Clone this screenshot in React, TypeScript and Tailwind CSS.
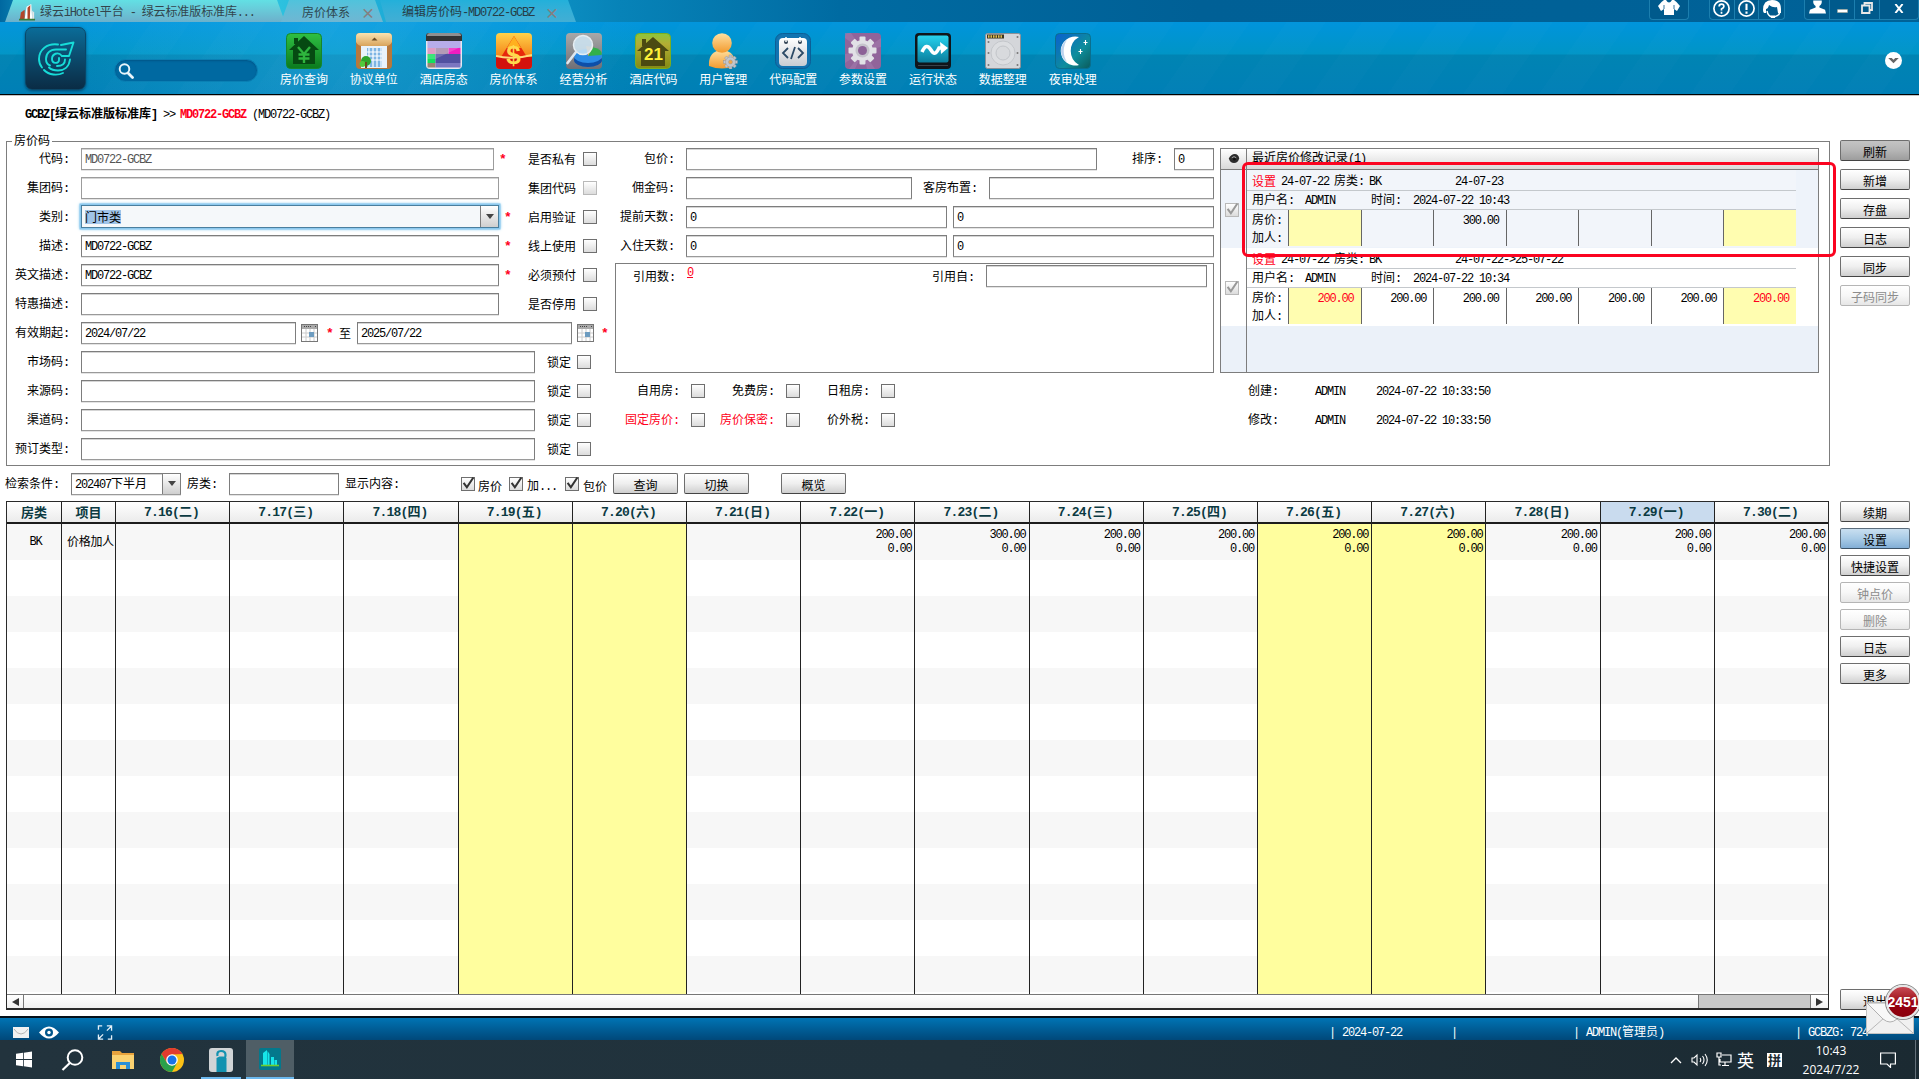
import React from "react";

/* Splits a string so Latin runs sit on a 6px pitch beside 12px Han characters. */
function T({ s, b = false, c = "" }: { s: string; b?: boolean; c?: string }) {
  const parts = s.match(/[\x20-\x7e]+|[^\x20-\x7e]+/g) || [];
  return (
    <span className={"whitespace-pre " + c}>
      {parts.map((p, i) =>
        /[\x20-\x7e]/.test(p[0]) ? (
          <span
            key={i}
            className={
              b
                ? "font-['Liberation_Mono','Noto_Sans_CJK_SC',monospace] tracking-[-0.8px]"
                : "font-['Liberation_Mono','Noto_Sans_CJK_SC',monospace] tracking-[-1.2px]"
            }
          >
            {p}
          </span>
        ) : (
          <span key={i}>{p}</span>
        )
      )}
    </span>
  );
}

function Box({ c = "", children }: { c?: string; children?: React.ReactNode }) {
  return (
    <div
      className={
        "flex h-[22px] shrink-0 items-center border border-[#7d7d7d] border-b-[#9a9a9a] bg-white pl-[3px] shadow-[inset_0_1px_0_#d5d5d5,0_1px_0_#e4e4e4] " + c
      }
    >
      {children}
    </div>
  );
}

function Check({ on = false, dim = false, c = "" }: { on?: boolean; dim?: boolean; c?: string }) {
  return (
    <div
      className={
        "flex h-[14px] w-[14px] shrink-0 items-center justify-center border bg-gradient-to-b from-white to-[#dcdcdc] " +
        (dim ? "border-[#b9b9b9] " : "border-[#6f6f6f] ") +
        c
      }
    >
      {on && (
        <svg viewBox="0 0 12 12" className="h-[13px] w-[13px] overflow-visible">
          <path d="M1.5 5.5 L4.5 9.5 L10.5 0.5" fill="none" stroke={dim ? "#999" : "#333"} strokeWidth="1.9" />
        </svg>
      )}
    </div>
  );
}

function Btn({ s, kind = "normal", c = "" }: { s: string; kind?: string; c?: string }) {
  const look: Record<string, string> = {
    normal: "border-[#6e6e6e] border-b-[#444] from-white via-[#efefef] to-[#cfcfcf] text-black",
    dark: "border-[#6e6e6e] border-b-[#444] from-[#c4c4c4] via-[#b5b5b5] to-[#9d9d9d] text-black",
    blue: "border-[#5b6c7c] border-b-[#3c5266] from-[#c9dff0] via-[#a9cbe6] to-[#82aed6] text-black",
    off: "border-[#b5b5b5] from-white via-[#f7f7f7] to-[#e6e6e6] text-[#8c8c8c]",
  };
  return (
    <div
      className={
        "flex h-[21px] shrink-0 items-center justify-center rounded-[2px] border bg-gradient-to-b pt-[3px] " + look[kind] + " " + c
      }
    >
      {s}
    </div>
  );
}

const Star = ({ c = "" }: { c?: string }) => (
  <span className={"w-[8px] shrink-0 pt-[3px] font-['Liberation_Mono',monospace] text-[13px] font-bold text-[#ff0020] " + c}>*</span>
);

function Label({ s, c = "" }: { s: string; c?: string }) {
  return (
    <div className={"shrink-0 text-right " + c}>
      <T s={s} />
    </div>
  );
}

const Calendar = ({ c = "" }: { c?: string }) => (
  <svg viewBox="0 0 17 18" className={"h-[18px] w-[17px] shrink-0 " + c}>
    <rect x="0.5" y="0.5" width="16" height="17" fill="#fff" stroke="#777" />
    <rect x="1" y="1" width="15" height="4" fill="#aaa" />
    <path d="M3 2.5h8M14 2.5h1" stroke="#444" strokeDasharray="1 1" />
    <path d="M1 9h15M1 13h15M5 5v12M9 5v12M13 5v12" stroke="#ccc" />
    <rect x="8" y="8" width="5" height="5" fill="#6d9cc0" />
  </svg>
);

/* ---------- toolbar icons, all 36 x 36 ---------- */
const defs = (
  <svg className="absolute h-0 w-0">
    <defs>
      <linearGradient id="gGreen" x2="0" y2="1"><stop stopColor="#2fc043" /><stop offset="1" stopColor="#0b7a1e" /></linearGradient>
      <linearGradient id="gTan" x2="0" y2="1"><stop stopColor="#fbe3b0" /><stop offset="1" stopColor="#d9a45c" /></linearGradient>
      <linearGradient id="gOrange" x2="0" y2="1"><stop stopColor="#ffd24a" /><stop offset="0.6" stopColor="#f58a1c" /></linearGradient>
      <linearGradient id="gGrey" x2="0" y2="1"><stop stopColor="#a8a8a8" /><stop offset="1" stopColor="#6f6f76" /></linearGradient>
      <linearGradient id="gOlive" x2="0" y2="1"><stop stopColor="#8cc63c" /><stop offset="0.3" stopColor="#b3ad34" /><stop offset="1" stopColor="#858a14" /></linearGradient>
      <linearGradient id="gMan" x2="0" y2="1"><stop stopColor="#ffe0a0" /><stop offset="1" stopColor="#f29a2e" /></linearGradient>
      <linearGradient id="gWhite" x2="0" y2="1"><stop stopColor="#fff" /><stop offset="1" stopColor="#c9ccd2" /></linearGradient>
      <linearGradient id="gCyan" x2="0" y2="1"><stop stopColor="#27d2ee" /><stop offset="1" stopColor="#0a7d9c" /></linearGradient>
      <linearGradient id="gNight" x2="1" y2="1"><stop stopColor="#0b5fd0" /><stop offset="0.6" stopColor="#0d8e9c" /><stop offset="1" stopColor="#0b5a5a" /></linearGradient>
    </defs>
  </svg>
);

const gearTeeth = [0, 45, 90, 135, 180, 225, 270, 315];

const icons: Record<string, React.ReactNode> = {
  房价查询: (
    <>
      <rect x=".5" y=".5" width="35" height="35" rx="4" fill="url(#gGreen)" stroke="#17862a" />
      <path d="M18 3 L33 17 H29 V31 H7 V17 H3 Z M8 5h4v6h-4z" fill="#064a12" />
      <path d="M12 14 L18 21 L24 14 M18 21 V30 M12.5 21.5 H23.5 M12.5 25.5 H23.5" stroke="#2fb53e" strokeWidth="2.4" fill="none" />
    </>
  ),
  协议单位: (
    <>
      <rect width="36" height="36" rx="4" fill="#b7783c" />
      <path d="M0 4a4 4 0 0 1 4-4h28a4 4 0 0 1 4 4v5q-2 4-6 4H6Q2 13 0 9z" fill="url(#gTan)" />
      <rect x="5" y="13" width="26" height="22" fill="#e9f3fb" />
      <rect x="11" y="15" width="15" height="19" fill="#7db5e4" />
      <path d="M13 15v19M17 15v19M21 15v19M25 15v19M11 19h15M11 23h15M11 27h15" stroke="#fff" strokeWidth="1.2" />
      <path d="M15.5 7.5h6l-3-3z" fill="#6b4a20" />
      <circle cx="10" cy="28" r="5" fill="#2fa52d" /><circle cx="6.5" cy="31" r="3" fill="#53c93c" /><path d="M10 29v6" stroke="#6b4a20" strokeWidth="2" />
    </>
  ),
  酒店房态: (
    <>
      <rect width="36" height="36" rx="4" fill="#e8e8f0" />
      <path d="M0 3a3 3 0 0 1 3-3h30a3 3 0 0 1 3 3v5H0z" fill="#333" /><path d="M1 3a3 3 0 0 1 3-3h28a3 3 0 0 1 3 3z" fill="#909090" />
      <rect x="1.5" y="8" width="33" height="7" fill="#a89be6" />
      <rect x="1.5" y="15" width="8" height="6" fill="#d985b6" /><rect x="9.5" y="15" width="13" height="6" fill="#a486a8" /><rect x="22.5" y="15" width="12" height="6" fill="#f01cc0" />
      <rect x="1.5" y="21" width="8" height="9" fill="#12e05c" /><rect x="9.5" y="21" width="25" height="9" fill="#5150a0" />
      <rect x="1.5" y="30" width="8" height="4.5" fill="#9a8470" /><rect x="9.5" y="30" width="25" height="4.5" fill="#7b76c0" />
      <path d="M1.5 8h33v6L9.5 26H1.5z" fill="#fff" opacity=".18" />
    </>
  ),
  房价体系: (
    <>
      <rect width="36" height="36" rx="4" fill="url(#gOrange)" />
      <path d="M18 3 L34 29 H2 Z" fill="#e8280c" /><path d="M18 3L25 15H11z" fill="#ffb01e" />
      <path d="M0 24h36v8a4 4 0 0 1-4 4H4a4 4 0 0 1-4-4z" fill="#d3120c" />
      <path d="M0 23 Q18 27 36 22" stroke="#ffd97a" strokeWidth="2" fill="none" />
      <text x="17.5" y="30.5" textAnchor="middle" fontFamily="Liberation Sans, sans-serif" fontWeight="bold" fontSize="26" fill="#ffd84d">$</text>
    </>
  ),
  经营分析: (
    <>
      <rect width="36" height="36" rx="4" fill="url(#gGrey)" />
      <ellipse cx="22" cy="27" rx="14" ry="7" fill="#0d4fa8" /><ellipse cx="22" cy="23" rx="14" ry="7" fill="#2b8ce6" />
      <path d="M22 23 L26 14 A14 7 0 0 1 35.5 22z" fill="#32b04a" /><path d="M22 23 L20 13 l7 1z" fill="#f3a058" />
      <circle cx="17" cy="12" r="9.5" fill="#cfe6f5" fillOpacity=".85" stroke="#e6eef3" strokeWidth="1.5" />
      <path d="M10 19 L1.5 30" stroke="#dfe7ee" strokeWidth="2.6" strokeLinecap="round" />
    </>
  ),
  酒店代码: (
    <>
      <rect x=".5" y=".5" width="35" height="35" rx="4" fill="url(#gOlive)" stroke="#7cae1d" />
      <path d="M18 4 L34 18 H30 V33 H6 V18 H2 Z M7 6h4v7h-4z" fill="#4b4a12" />
      <text x="18.5" y="27" textAnchor="middle" fontFamily="Liberation Sans, sans-serif" fontWeight="bold" fontSize="17" fill="#fff13a">21</text>
    </>
  ),
  用户管理: (
    <>
      <path d="M4 33 Q3 18 17 17 Q31 18 30 33 Q17 38 4 33z" fill="url(#gMan)" />
      <circle cx="17" cy="10" r="9.8" fill="url(#gMan)" />
      <g transform="translate(25.5 29)" fill="#c3c6cc" stroke="#8c8f96" strokeWidth=".4">
        {gearTeeth.map((a) => <rect key={a} x="-1.5" y="-7" width="3" height="4" transform={`rotate(${a})`} />)}
        <circle r="5" /><circle r="2" fill="#f0a84a" />
      </g>
    </>
  ),
  代码配置: (
    <>
      <rect x=".5" y=".5" width="35" height="35" rx="7" fill="#1173b0" stroke="#0c5f96" />
      <rect x="4" y="5" width="28" height="28" rx="4" fill="url(#gWhite)" />
      <circle cx="11" cy="9" r="2" fill="#345" /><circle cx="25" cy="9" r="2" fill="#345" />
      <path d="M11 4v5M25 4v5" stroke="#fff" strokeWidth="1.5" />
      <path d="M13 15l-5 5 5 5M23 15l5 5-5 5M20 14l-4 12" stroke="#2c4a66" strokeWidth="1.8" fill="none" />
    </>
  ),
  参数设置: (
    <>
      <rect width="36" height="36" rx="4" fill="#91649a" />
      <path d="M18 18L0 5V0h6zM18 18L36 5V14zM18 18L0 30v-9zM18 18L30 36h-8zM18 18L10 36H4z" fill="#a47cae" opacity=".6" />
      <g transform="translate(17.5 17.5)" fill="#e1e1e6">
        {gearTeeth.map((a) => <rect key={a} x="-3" y="-14" width="6" height="8" rx="1" transform={`rotate(${a})`} />)}
        <circle r="10.5" /><circle r="7" fill="#c5c3cc" /><circle r="4.5" fill="#8c6197" />
      </g>
    </>
  ),
  运行状态: (
    <>
      <rect width="36" height="36" rx="4" fill="#10151a" />
      <rect x="2.5" y="2.5" width="31" height="27" rx="2" fill="url(#gCyan)" />
      <path d="M7 19 C10 12 13 12 16 17 S21 21 24 15 H27" stroke="#fff" strokeWidth="3.6" fill="none" />
      <path d="M25 9l8 6-7 6z" fill="#fff" /><path d="M3 32.5h30" stroke="#3a4148" />
    </>
  ),
  数据整理: (
    <>
      <rect x=".5" y=".5" width="35" height="35" rx="2" fill="#d4d6da" stroke="#8c9198" />
      <rect x="2" y="1.5" width="17" height="4" fill="#3a3420" /><path d="M3 3.5h15" stroke="#e0bf50" strokeWidth="2.4" strokeDasharray="1.5 1" />
      <circle cx="18" cy="20" r="12" fill="#dcdee1" stroke="#c4c7cb" /><circle cx="18" cy="20" r="7" fill="#d8dadd" stroke="#c2c5c9" />
      <g fill="#777"><circle cx="3.5" cy="9" r="1" /><circle cx="32.5" cy="4" r="1" /><circle cx="3.5" cy="32" r="1" /><circle cx="32.5" cy="32" r="1" /><circle cx="3.5" cy="20" r="1" /><circle cx="32.5" cy="20" r="1" /></g>
    </>
  ),
  夜审处理: (
    <>
      <rect x=".5" y=".5" width="35" height="35" rx="4" fill="url(#gNight)" stroke="#0a6f8e" />
      <path d="M24 4 A14.5 14.5 0 1 0 24 32 A16 16 0 0 1 24 4z" fill="#fff" /><path d="M12 7A13 13 0 0 0 12 29A20 20 0 0 1 12 7z" fill="#bcd3ee" />
      <path d="M30.5 7v5M28.5 9.5h4M25.5 16v5M23.5 18.5h4" stroke="#fff" strokeWidth="1.1" />
    </>
  ),
};

function Header() {
  return (
    <header className="relative h-[96px] shrink-0 border-b border-[#c4c4c4] bg-black pb-px">
      <div className="flex h-[22px] items-start bg-[linear-gradient(90deg,#0068a0_0,#1fb4d8_60px,#38cfe3_210px,#25b7dc_330px,#149fd0_460px,#0783b8_620px,#006ba2_840px,#006096_1200px,#006298_100%)] pl-[5px]">
        <div className="flex h-[22px] w-[280px] items-center bg-gradient-to-b from-[#62e0e4] to-[#6cb0cb] pl-[14px] pt-[2px] text-[#33454d] [clip-path:polygon(8px_0,272px_0,280px_100%,0_100%)]">
          <svg viewBox="0 0 18 18" className="mr-[4px] h-[17px] w-[17px]">
            <path d="M1 16L2 9l4-3v10z" fill="#b3452a" /><path d="M6 16L8 3l5-3 1 16z" fill="#fff" /><path d="M9 4v12h2.500L12 1z" fill="#b3452a" /><path d="M14 7l2 2v7h-2z" fill="#e7e7e7" /><path d="M0 16.500h17" stroke="#3c7c3a" strokeWidth="2" />
          </svg>
          <T s="绿云iHotel平台 - 绿云标准版标准库..." c="tracking-[-0.1px]" />
        </div>
        <div className="-ml-[4px] flex h-[22px] w-[102px] items-center bg-gradient-to-b from-[#4fc3dc] to-[#6fb6d2] pl-[21px] pt-[2px] text-[#2f474f] [clip-path:polygon(8px_0,94px_0,102px_100%,95px_100%,0_100%)]">
          <T s="房价体系" />
          <span className="ml-[11px] text-[14px] leading-none font-bold text-[#857f80]">×</span>
        </div>
        <div className="-ml-[3px] flex h-[22px] w-[196px] items-center bg-gradient-to-b from-[#22b0da] to-[#42aed4] pl-[22px] pt-[2px] text-[#263d47] [clip-path:polygon(0_0,188px_0,196px_100%,6px_100%)]">
          <T s="编辑房价码-MD0722-GCBZ" />
          <span className="ml-[11px] text-[14px] leading-none font-bold text-[#857f80]">×</span>
        </div>
        <div className="ml-auto flex h-[20px]">
          <div className="flex w-[40px] items-center justify-center rounded-b-[4px] border border-t-0 border-[#1c7faf] bg-[#005a8c]">
            <svg viewBox="0 0 22 15" className="mb-[5px] h-[15px] w-[22px]"><path d="M6 0L3.500 2 0 6l3 5 3-2v6h10V9l3 2 3-5-3.500-4L16 0l-2 0q-3 5-6 0z" fill="#fff" /><path d="M6 5v4M16 5v4" stroke="#00568a" strokeWidth=".8" /></svg>
          </div>
          <div className="ml-[20px] flex w-[76px] rounded-b-[4px] border border-t-0 border-[#1c7faf] bg-[#005a8c]">
            <div className="flex w-[25px] items-center justify-center border-r border-[#1c7faf]">
              <svg viewBox="0 0 20 20" className="mb-[3px] h-[19px] w-[19px]"><circle cx="10" cy="10" r="8" fill="none" stroke="#fff" strokeWidth="1.8" /><path d="M7.5 8q0-2.500 2.500-2.500t2.500 2.300q0 1.400-2.500 2.700v1.500M10 13.500v2" fill="none" stroke="#fff" strokeWidth="1.8" /></svg>
            </div>
            <div className="flex w-[25px] items-center justify-center border-r border-[#1c7faf]">
              <svg viewBox="0 0 20 20" className="mb-[3px] h-[19px] w-[19px]"><circle cx="10" cy="10" r="8" fill="none" stroke="#fff" strokeWidth="1.8" /><path d="M10 5v6.500M10 13.200v2.200" stroke="#fff" strokeWidth="2.2" /></svg>
            </div>
            <div className="flex w-[25px] items-center justify-center">
              <svg viewBox="0 0 20 18" className="mb-[2px] h-[18px] w-[20px]"><path d="M1 10Q1 0 10 0t9 9v4h-3l-1-6Q11 8 7 5 6 9 4 9v4H2q-1-1-1-3z" fill="#fff" /><path d="M5 11q1 5 5 6M18 12q-1 4-6 5" stroke="#fff" strokeWidth="1.4" fill="none" /><path d="M9 15.500h4v2.500H9z" fill="#fff" /></svg>
            </div>
          </div>
          <div className="ml-[19px] flex w-[115px] rounded-b-[4px] border border-t-0 border-[#1c7faf] bg-[#005a8c]">
            <div className="flex w-[25px] justify-center border-r border-[#1c7faf]">
              <svg viewBox="0 0 18 14" className="ml-[1px] h-[14px] w-[17px]"><path d="M4.500 0h9q.5 4-2.500 6v1.500L17 10l1 4H0l1-4 6-2.500V6Q4 4 4.500 0z" fill="#fff" /></svg>
            </div>
            <div className="flex w-[25px] justify-center border-r border-[#1c7faf] pt-[9px]"><div className="h-[4px] w-[11px] rounded-[1px] border border-[#9aa] bg-white" /></div>
            <div className="flex w-[25px] justify-center border-r border-[#1c7faf] pt-[2px]">
              <svg viewBox="0 0 12 12" className="h-[12px] w-[12px]"><path d="M3.500 3V1h7.500v7H9M1 3.500h7.500V11H1z" fill="none" stroke="#e8e8e8" strokeWidth="1.8" /></svg>
            </div>
            <div className="flex flex-1 justify-center pt-[4px]"><svg viewBox="0 0 10 10" className="h-[9px] w-[10px]"><path d="M1 0l8 10M9 0L1 10" stroke="#fff" strokeWidth="2.2" /></svg></div>
          </div>
        </div>
      </div>
      <div className="flex h-[72px] bg-[repeating-linear-gradient(125deg,rgba(255,255,255,0.012)_0_32px,transparent_32px_62px),radial-gradient(circle_at_340px_20px,rgba(60,190,240,0.35),transparent_300px),linear-gradient(180deg,#0094dc_0,#0095c6_32px,#0084b3_33px,#007fb6_72px)]">
        <div className="ml-[25px] mt-[5px] flex h-[63px] w-[61px] items-center justify-center rounded-[7px] border border-[#0a4768] bg-gradient-to-b from-[#0a6c98] via-[#0b4a6c] to-[#0a2c45] shadow-[0_1px_3px_#00456d]">
          <svg viewBox="0 0 36 33" className="h-[33px] w-[36px] overflow-visible" fill="none" stroke="#17dcd8" strokeWidth="1.9" strokeLinecap="round" strokeLinejoin="round">
            <path d="M20 2.500C9 1 1 8 1 17c0 3 1 6 3 8.500" />
            <path d="M23 3 35.500.5 31 14h-7" />
            <path d="M28 7.500H18c-6 0-10 4-10 9.500 0 3 1.500 5.500 4 6.500" />
            <path d="M24 14c-4-5-10-2-10 3 0 5 7 5 7 1v-2" />
            <path d="M32 17.500c-1 8-6.500 11-12 11-4 0-7-1-9-3" />
            <path d="M27 17.500c0 4-3 6.500-8 6.500M6 28c5 5.500 14 5.500 19 3" />
          </svg>
        </div>
        <div className="ml-[28px] mt-[37px] flex h-[23px] w-[144px] items-center rounded-full border border-[#0a80b4] bg-[#0069a1] pl-[3px] shadow-[inset_0_1px_2px_#005688]">
          <svg viewBox="0 0 16 16" className="h-[16px] w-[16px]"><circle cx="6.5" cy="6" r="4.8" fill="none" stroke="#e9f5fb" strokeWidth="1.9" /><path d="M10 10l4.500 4.500" stroke="#e9f5fb" strokeWidth="2.8" strokeLinecap="round" /></svg>
        </div>
        <nav className="ml-[11px] mt-[11px] flex">
          {Object.keys(icons).map((k) => (
            <div key={k} className="flex w-[69.9px] flex-col items-center">
              <svg viewBox="0 0 36 36" className="h-[36px] w-[36px]">{icons[k]}</svg>
              <span className="mt-[3px] leading-[13px] whitespace-nowrap text-white">{k}</span>
            </div>
          ))}
        </nav>
        <div className="mt-[30px] mr-[17px] ml-auto flex h-[17px] w-[17px] items-center justify-center rounded-full bg-white">
          <svg viewBox="0 0 12 8" className="h-[7px] w-[11px]"><path d="M0 1h4l2 2 2-2h4L6 7z" fill="#666" /></svg>
        </div>
      </div>
    </header>
  );
}

/* ---------- left part of the form ---------- */
const leftRows = [
  { l: "代码:", v: "MD0722-GCBZ", w: "w-[413px] border-[#9c9c9c]", star: "ml-[5px]", c: "是否私有", cc: "ml-[21px]", grey: true },
  { l: "集团码:", v: "", w: "w-[418px] border-[#9c9c9c]", star: "", c: "集团代码", cc: "ml-[29px]" },
  { l: "类别:", v: "门市类", w: "", star: "ml-[5px]", c: "启用验证", cc: "ml-[16px]" },
  { l: "描述:", v: "MD0722-GCBZ", w: "w-[418px]", star: "ml-[5px]", c: "线上使用", cc: "ml-[16px]" },
  { l: "英文描述:", v: "MD0722-GCBZ", w: "w-[418px]", star: "ml-[5px]", c: "必须预付", cc: "ml-[16px]" },
  { l: "特惠描述:", v: "", w: "w-[418px]", star: "", c: "是否停用", cc: "ml-[29px]" },
];

function LeftForm() {
  return (
    <div className="-mt-[1px] w-[608px] shrink-0">
      {leftRows.map((r, i) => (
        <div key={r.l} className="flex h-[29px] items-center">
          <Label s={r.l} c="mr-[12px] w-[62px]" />
          {i === 2 ? (
            <div className="flex h-[23px] w-[418px] shrink-0 items-center border border-[#4a7f9e] bg-[#f5f8fa] pl-[3px] shadow-[0_0_0_1.5px_#8dc9ee,0_0_3px_1px_#4fb0e6]">
              <span className="bg-[#a0c4e8]">{r.v}</span>
              <Drop c="ml-auto h-full w-[18px]" />
            </div>
          ) : (
            <Box c={r.w}>
              <T s={r.v} c={r.grey ? "text-[#555]" : ""} />
            </Box>
          )}
          {r.star && <Star c={r.star} />}
          <span className={"mr-[7px] whitespace-nowrap " + r.cc}>{r.c}</span>
          <Check dim={i === 1} />
        </div>
      ))}
      <div className="flex h-[29px] items-center">
        <Label s="有效期起:" c="mr-[12px] w-[62px]" />
        <Box c="w-[215px]"><T s="2024/07/22" /></Box>
        <Calendar c="ml-[5px]" />
        <Star c="ml-[8px]" />
        <span className="mr-[6px] ml-[5px]">至</span>
        <Box c="w-[215px]"><T s="2025/07/22" /></Box>
        <Calendar c="ml-[5px]" />
        <Star c="ml-[7px]" />
      </div>
      {["市场码:", "来源码:", "渠道码:", "预订类型:"].map((l) => (
        <div key={l} className="flex h-[29px] items-center">
          <Label s={l} c="mr-[12px] w-[62px]" />
          <Box c="w-[454px]" />
          <span className="mr-[6px] ml-[12px]">锁定</span>
          <Check />
        </div>
      ))}
    </div>
  );
}

function Drop({ c = "" }: { c?: string }) {
  return (
    <div className={"flex items-center justify-center border-l border-[#7d7d7d] bg-gradient-to-b from-white to-[#cfcfcf] " + c}>
      <div className="h-0 w-0 border-x-4 border-t-[5px] border-x-transparent border-t-[#444]" />
    </div>
  );
}

function MiddleForm() {
  return (
    <div className="-mt-[1px] w-[605px] shrink-0">
      <div className="flex h-[29px] items-center">
        <Label s="包价:" c="mr-[12px] w-[59px]" />
        <Box c="w-[411px]" />
        <Label s="排序:" c="ml-[32px] mr-[12px] w-[33px]" />
        <Box c="w-[40px]"><T s="0" /></Box>
      </div>
      <div className="flex h-[29px] items-center">
        <Label s="佣金码:" c="mr-[12px] w-[59px]" />
        <Box c="w-[226px]" />
        <Label s="客房布置:" c="mr-[12px] w-[65px]" />
        <Box c="w-[225px]" />
      </div>
      {["提前天数:", "入住天数:"].map((l) => (
        <div key={l} className="flex h-[29px] items-center">
          <Label s={l} c="mr-[12px] w-[59px]" />
          <Box c="mr-[6px] w-[261px]"><T s="0" /></Box>
          <Box c="w-[261px]"><T s="0" /></Box>
        </div>
      ))}
      <div className="mt-[3px] flex h-[110px] w-[599px] items-start border border-[#7d7d7d] pt-[1px]">
        <Label s="引用数:" c="w-[59px] pt-[4px]" />
        <T s="0" c="ml-[12px] -mt-[1px] text-[#ff0020] underline" />
        <Label s="引用自:" c="ml-auto mr-[12px] pt-[4px]" />
        <Box c="mr-[6px] w-[221px]" />
      </div>
      <div className="mt-[3px] grid w-[300px] grid-cols-[90px_95px_95px]">
        {["自用房:", "免费房:", "日租房:", "固定房价:", "房价保密:", "价外税:"].map((l, i) => (
          <div key={l} className="flex h-[29px] items-center justify-end">
            <span className={i === 3 || i === 4 ? "text-[#ff0020]" : ""}><T s={l} /></span>
            <Check c="ml-[12px]" />
          </div>
        ))}
      </div>
    </div>
  );
}

const records = [
  { range: "24-07-23", time: "2024-07-22 10:43", vals: ["", "", "300.00", "", "", "", ""], bg: "bg-[#eef3fa]", inner: "bg-[#f2f5fa]" },
  { range: "24-07-22->25-07-22", time: "2024-07-22 10:34", vals: Array(7).fill("200.00"), bg: "bg-white", inner: "bg-white" },
];

function RecordPanel() {
  return (
    <div className="w-[608px] shrink-0 pt-[3px]">
      <div className="relative h-[225px] w-[599px] border border-[#7d7d7d] bg-[#ebf1f9]">
        <div className="flex h-[21px] items-center border-b border-[#7d7d7d] bg-gradient-to-b from-white to-[#d9d9d9]">
          <div className="flex h-full w-[26px] items-center justify-center border-r border-[#7d7d7d] pb-[2px]">
            <svg viewBox="0 0 14 12" className="h-[9px] w-[12px]"><path d="M0 6Q3 0 8 0t6 6q-2 6-7 6T0 6z" fill="#2c2c2c" /><path d="M4 5q3-3 6 0" stroke="#aaa" strokeWidth="1.3" fill="none" /><circle cx="7.5" cy="7" r="1.8" fill="#111" /></svg>
          </div>
          <T s="最近房价修改记录(1)" c="-mt-[2px] ml-[5px]" />
        </div>
        <div className="flex h-[202px]">
          <div className="w-[26px] shrink-0 border-r border-[#7d7d7d]">
            {records.map((r) => (
              <div key={r.time} className={"flex h-[78px] items-center justify-center " + r.bg}>
                <Check on dim c="mr-[3px] mt-[1px]" />
              </div>
            ))}
          </div>
          <div className="flex-1">
            {records.map((r, k) => (
              <div key={r.time} className={"h-[78px] " + r.bg}>
                <div className={"h-[77px] w-[549px] " + r.inner}>
                  <div className="flex h-[21px] items-center border-b border-[#c4c8cc] pt-[2px] pl-[5px]">
                    <span className="text-[#ff0020]">设置</span>
                    <T s=" 24-07-22 " c="-mx-[1px]" />
                    <T s="房类:" />
                    <T s="BK" c="ml-[5px] w-[86px]" />
                    <T s={r.range} />
                  </div>
                  <div className="flex h-[19px] items-center border-b border-[#c4c8cc] pl-[5px]">
                    <T s="用户名:" c="w-[53px]" />
                    <T s="ADMIN" c="w-[66px]" />
                    <T s="时间:" c="w-[42px]" />
                    <T s={r.time} />
                  </div>
                  <div className="flex h-[36px]">
                    <div className="flex w-[41px] flex-col pl-[5px] leading-[18px]"><T s="房价:" c="h-[18px]" /><T s="加人:" c="h-[18px]" /></div>
                    {r.vals.map((v, i) => (
                      <div
                        key={i}
                        className={
                          "flex-1 border-l border-[#666] pr-[7px] text-right leading-[18px] " +
                          (i === 0 || i === 6 ? "bg-[#fffdb0] " : "") +
                          (k === 1 && (i === 0 || i === 6) ? "text-[#ff0020]" : "")
                        }
                      >
                        <T s={v} />
                      </div>
                    ))}
                  </div>
                </div>
              </div>
            ))}
          </div>
        </div>
        <div className="absolute top-[13px] left-[21px] h-[95px] w-[594px] rounded-[6px] border-[3px] border-[#fb0420]" />
      </div>
      <div className="mt-[3px]">
        {["创建:", "修改:"].map((l) => (
          <div key={l} className="flex h-[29px] items-center pl-[28px]">
            <T s={l} c="w-[67px]" />
            <T s="ADMIN" c="w-[61px]" />
            <T s="2024-07-22 10:33:50" />
          </div>
        ))}
      </div>
    </div>
  );
}

/* ---------- price calendar ---------- */
const days = ["7.16(二)", "7.17(三)", "7.18(四)", "7.19(五)", "7.20(六)", "7.21(日)", "7.22(一)", "7.23(二)", "7.24(三)", "7.25(四)", "7.26(五)", "7.27(六)", "7.28(日)", "7.29(一)", "7.30(二)"];
const weekend = [3, 4, 10, 11];

function PriceTable() {
  const head = "flex h-[22px] shrink-0 items-center justify-center border-b-2 border-[#1c1c1c] text-[13px] font-bold text-[#0b3a42] ";
  const stripe = "h-[471px] bg-[repeating-linear-gradient(180deg,#f7f7f7_0_36px,#fff_36px_72px)]";
  return (
    <div className="h-[509px] w-[1823px] shrink-0 border border-b-2 border-[#2a2a2a]">
      <div className="flex h-[492px] overflow-hidden">
        <div className="w-[55px] shrink-0 border-r border-[#222]">
          <div className={head + "bg-gradient-to-b from-white to-[#ebebeb]"}>房类</div>
          <div className={stripe}><div className="flex h-[34px] items-center justify-center pl-[3px]"><T s="BK" /></div></div>
        </div>
        <div className="w-[54px] shrink-0 border-r border-[#222]">
          <div className={head + "bg-gradient-to-b from-white to-[#ebebeb]"}>项目</div>
          <div className={stripe}><div className="flex h-[34px] items-center overflow-hidden pl-[5px] tracking-[-0.3px] whitespace-nowrap">价格加人</div></div>
        </div>
        {days.map((d, i) => (
          <div key={d} className="min-w-0 flex-1 border-r border-[#222] last:border-r-0">
            <div className={head + (i === 13 ? "bg-[#c9dbee]" : "bg-gradient-to-b from-white to-[#ebebeb]")}><T s={d} b c="-ml-[2px]" /></div>
            <div className={weekend.includes(i) ? "h-[471px] bg-[#fffe9e]" : stripe}>
              {i >= 6 && (
                <div className="flex flex-col items-end pt-[2px] pr-[3px] leading-[14px]">
                  <T s={i === 7 ? "300.00" : "200.00"} c="h-[14px]" />
                  <T s="0.00" c="h-[14px]" />
                </div>
              )}
            </div>
          </div>
        ))}
      </div>
      <div className="flex h-[14px] border-t border-[#777] bg-gradient-to-b from-white to-[#f0f0f0]">
        <div className="flex w-[17px] items-center justify-center border-r border-[#777]"><div className="h-0 w-0 border-y-[4px] border-r-[7px] border-y-transparent border-r-[#333]" /></div>
        <div className="flex-1" />
        <div className="w-[113px] border-x border-[#777] bg-[#c8c8c8]" />
        <div className="flex w-[17px] items-center justify-center"><div className="h-0 w-0 border-y-[4px] border-l-[7px] border-y-transparent border-l-[#333]" /></div>
      </div>
    </div>
  );
}

function StatusBar() {
  return (
    <div className="flex h-[24px] shrink-0 items-center border-t-2 border-[#05101a] bg-gradient-to-b from-[#0074b4] to-[#00487a] pt-[6px] pl-[13px] text-white">
      <svg viewBox="0 0 16 11" className="h-[11px] w-[16px]"><rect width="16" height="11" fill="#f1f1f1" /><path d="M1 2q3 5 7 5t7-5" fill="none" stroke="#b5b5b5" /></svg>
      <svg viewBox="0 0 20 12" className="ml-[10px] h-[13px] w-[20px]"><path d="M0 6Q10-6 20 6Q10 18 0 6z" fill="#fff" /><circle cx="10" cy="6" r="4" fill="#00568c" /><circle cx="10" cy="6" r="1.7" fill="#fff" /></svg>
      <svg viewBox="0 0 16 16" className="ml-[38px] h-[15px] w-[16px]" fill="none" stroke="#e4f0f7" strokeWidth="1.4"><path d="M1 5V1h4M11 15h4v-4M10 1h5v5M15 1l-5 5M1 10v5h5M1 15l5-5" /></svg>
      <T s="|" c="ml-[1216px] w-[13px]" />
      <T s="2024-07-22" c="w-[109px]" />
      <T s="|" c="w-[122px]" />
      <T s="|" c="w-[13px]" />
      <T s="ADMIN(管理员)" c="w-[209px]" />
      <T s="|" c="w-[13px]" />
      <T s="GCBZG: 724" />
    </div>
  );
}

function Taskbar() {
  return (
    <div className="flex h-[39px] shrink-0 items-center bg-[linear-gradient(90deg,#22333d,#20323c_50%,#1b2a32)] text-white">
      <svg viewBox="0 0 16 16" className="ml-[16px] h-[17px] w-[16px]"><path d="M0 2.300L7 1.300V7.600H0zM7.800 1.200L16 0V7.600H7.800zM0 8.400H7v6.300L0 13.700zM7.800 8.400H16V16L7.800 14.800z" fill="#fff" /></svg>
      <svg viewBox="0 0 22 22" className="ml-[29px] h-[22px] w-[23px]"><circle cx="13.5" cy="8.5" r="7.3" fill="none" stroke="#fff" strokeWidth="2" /><path d="M8.300 14L1 21" stroke="#fff" strokeWidth="2.2" /></svg>
      <svg viewBox="0 0 22 18" className="ml-[28px] h-[18px] w-[22px]"><path d="M0 0h8l2 2h12v16H0z" fill="#e8a33d" /><path d="M0 4h22v14H0z" fill="#fbd271" /><path d="M4 18v-7h14v7h-4v-4H8v4z" fill="#2a8fd6" /></svg>
      <svg viewBox="0 0 24 24" className="ml-[26px] h-[24px] w-[24px]">
        <circle cx="12" cy="12" r="12" fill="#fbc116" /><path d="M1.600 6A12 12 0 0 1 22.400 6L12 6.600 7 15z" fill="#e33b2e" /><path d="M1.600 6A12 12 0 0 0 12 24L17 15 12 17.500 7 15z" fill="#2aa04a" />
        <circle cx="12" cy="12" r="5.8" fill="#fff" /><circle cx="12" cy="12" r="4.5" fill="#1a73e8" />
      </svg>
      <div className="ml-[17px] flex h-full w-[40px] items-center justify-center border-b-2 border-[#6cb9ef] pt-[2px]">
        <svg viewBox="0 0 24 24" className="h-[24px] w-[24px]"><rect width="24" height="24" rx="3" fill="#d0d4d6" /><path d="M7.500 24V10l3-1.500h4l3 1.500v14z" fill="#1292b0" /><path d="M8.500 8q-1-5 3.500-5t4.500 4-3.500 5" fill="none" stroke="#1292b0" strokeWidth="2.2" /></svg>
      </div>
      <div className="ml-[5px] flex h-full w-[48px] items-center justify-center border-b-2 border-[#6cb9ef] bg-[#4f5e66]">
        <svg viewBox="0 0 22 22" className="h-[22px] w-[22px]"><rect width="22" height="22" rx="2" fill="#04788c" /><path d="M4 17V5l4-3v15zM8.500 17V3l2 3v11zM12 17V9h3v8zM15.500 17v-5h2.500v5z" fill="#16e6ea" /><path d="M2 17.500h18" stroke="#6fce2c" strokeWidth="1.6" /></svg>
      </div>
      <svg viewBox="0 0 12 8" className="ml-[1376px] h-[8px] w-[12px]"><path d="M1 7l5-5 5 5" fill="none" stroke="#fff" strokeWidth="1.3" /></svg>
      <svg viewBox="0 0 18 14" className="ml-[9px] h-[14px] w-[18px]" fill="none" stroke="#fff" strokeWidth="1.1"><path d="M1 5h2l3-3v10L3 9H1zM9 5q1.500 2 0 4M11.500 3q3 4 0 8M14 1q4.500 6 0 12" /></svg>
      <svg viewBox="0 0 16 15" className="ml-[7px] h-[15px] w-[16px]" fill="none" stroke="#fff" strokeWidth="1.2"><path d="M6 3h9v7H4V7M9 10v3M6 13.500h7M1 1h4v4H1zM3 5v8h2" /></svg>
      <span className="ml-[5px] text-[17px] leading-none">英</span>
      <div className="ml-[13px] flex h-[14px] w-[15px] items-center justify-center bg-white text-[13px] leading-none font-bold text-[#1b2a32]">拼</div>
      <div className="ml-[16px] w-[66px] text-center font-['Open_Sans','Noto_Sans',sans-serif] text-[12px] leading-[19px]">
        <div>10:43</div>
        <div>2024/7/22</div>
      </div>
      <svg viewBox="0 0 16 16" className="ml-[16px] h-[16px] w-[16px]"><path d="M.6 1h14.800v11H10.500v3.400L7 12H.6z" fill="none" stroke="#fff" strokeWidth="1.2" /></svg>
      <div className="ml-[19px] h-full w-px bg-[#64707a]" />
    </div>
  );
}

const topButtons = [["刷新", "dark"], ["新增", "normal"], ["存盘", "normal"], ["日志", "normal"], ["同步", "normal"], ["子码同步", "off"]];
const sideButtons = [["续期", "normal"], ["设置", "blue"], ["快捷设置", "normal"], ["钟点价", "off"], ["删除", "off"], ["日志", "normal"], ["更多", "normal"]];

export default function App() {
  return (
    <div className="flex h-[1079px] w-[1919px] flex-col overflow-hidden bg-white font-['Noto_Sans_CJK_SC',sans-serif] text-[12px] leading-[14px] text-black">
      {defs}
      <Header />
      <div className="flex h-[45px] shrink-0 items-center pb-[10px] pl-[25px]">
        <b><T s="GCBZ[绿云标准版标准库]" /></b>
        <T s=">>" c="ml-[6px]" />
        <b className="ml-[5px] text-[#ff0020]"><T s="MD0722-GCBZ" /></b>
        <T s="(MD0722-GCBZ)" c="ml-[6px]" />
      </div>

      <div className="flex h-[325px] shrink-0 pl-[6px]">
        <div className="relative flex h-[325px] w-[1824px] shrink-0 border border-[#7d7d7d] pt-[3px]">
          <span className="absolute -top-[9px] left-[5px] bg-white px-[2px]">房价码</span>
          <LeftForm />
          <MiddleForm />
          <RecordPanel />
        </div>
        <div className="-mt-[1px] ml-[10px] flex w-[70px] flex-col gap-[8px]">
          {topButtons.map(([s, k]) => <Btn key={s} s={s} kind={k} />)}
        </div>
      </div>

      <div className="flex h-[35px] shrink-0 items-center pl-[5px]">
        <T s="检索条件:" c="w-[66px]" />
        <Box c="w-[110px]">
          <T s="202407下半月" />
          <Drop c="ml-auto h-full w-[18px]" />
        </Box>
        <T s="房类:" c="ml-[6px] w-[42px]" />
        <Box c="w-[110px]" />
        <T s="显示内容:" c="ml-[6px] w-[116px]" />
        <Check on />
        <T s="房价" c="mt-[4px] ml-[3px] w-[31px]" />
        <Check on />
        <T s="加..." c="mt-[4px] ml-[4px] w-[38px]" />
        <Check on />
        <T s="包价" c="mt-[4px] ml-[4px] w-[30px]" />
        <Btn s="查询" c="w-[65px]" />
        <Btn s="切换" c="ml-[6px] w-[65px]" />
        <Btn s="概览" c="ml-[32px] w-[65px]" />
      </div>

      <div className="flex h-[515px] shrink-0 pl-[6px]">
        <PriceTable />
        <div className="ml-[11px] flex h-[509px] w-[70px] flex-col gap-[6px]">
          {sideButtons.map(([s, k]) => <Btn key={s} s={s} kind={k} />)}
          <div className="relative mt-auto">
            <Btn s="退出" />
            <svg viewBox="0 0 48 32" className="absolute top-[13px] left-[26px] h-[32px] w-[48px]">
              <rect x=".5" y=".5" width="47" height="31" fill="#f0f0f0" stroke="#c2c2c2" />
              <path d="M1 31L18 16M47 31L30 16" stroke="#b8b8b8" /><path d="M1 1L17 17q7 6 14 0L47 1z" fill="#f8f8f8" stroke="#b0b0b0" />
            </svg>
            <div className="absolute -top-[4px] left-[46px] flex h-[34px] w-[34px] items-center justify-center rounded-full border-2 border-[#e6e6e6] bg-gradient-to-b from-[#c84a55] via-[#9a0010] to-[#8a000c] font-['Liberation_Sans',sans-serif] text-[14px] font-bold text-white shadow-[0_0_0_1px_#888]">2451</div>
          </div>
        </div>
      </div>
      <StatusBar />
      <Taskbar />
    </div>
  );
}
